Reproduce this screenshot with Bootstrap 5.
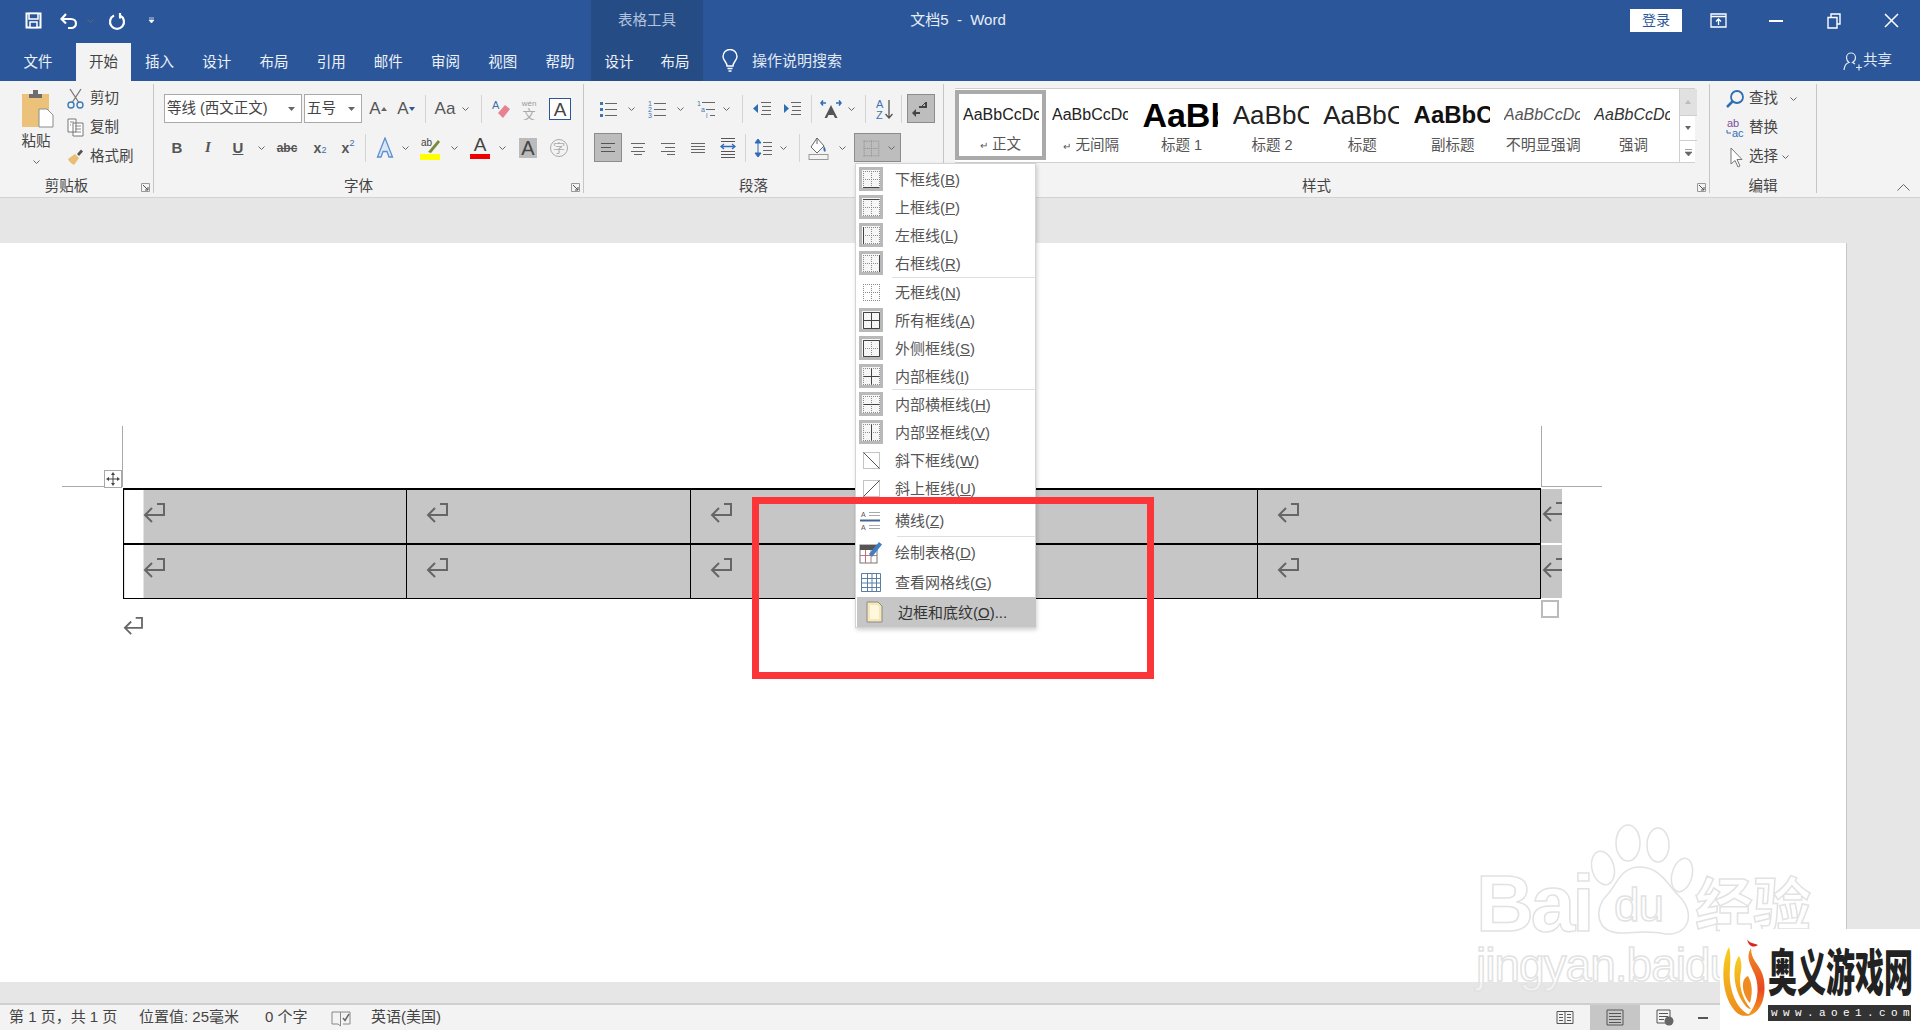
<!DOCTYPE html>
<html lang="zh-CN">
<head>
<meta charset="utf-8">
<title>文档5 - Word</title>
<link href="https://cdn.jsdelivr.net/npm/bootstrap@5.3.0/dist/css/bootstrap.min.css" rel="stylesheet">
<style>
html,body{height:1030px;overflow:hidden}
body{font-family:"Liberation Sans","Noto Sans CJK SC",sans-serif;font-size:15px;color:#444;background:#fff;position:relative}
.shell{height:1030px}
.tbar{height:41px;background:#2b579a;color:#fff}
.qat{width:591px;padding-left:25px}
.qb{width:21px;height:22px}
.qb2{width:10px;height:22px}
.q14{margin-left:14px}.q6{margin-left:6px}.q11{margin-left:11px}.qsp{margin-left:19px}
.ctxh{width:112px;background:#264c86;color:#b2c3dc;font-size:14.5px;line-height:41px}
.ttl{width:510px;color:#e8eef6;font-size:15px}
.signin{width:52px;height:23px;margin-left:auto;margin-right:8px;padding:0;border:0;border-radius:0;background:#fff;color:#2b579a;font-size:14px;line-height:23px}
.wbtn{width:57.5px;height:41px}
.tabs{height:40px;background:#2b579a}
.wtab{width:57.2px;height:38px;margin-top:2px;padding:0;color:#eef2f8;text-align:center;line-height:38px;font-size:14.5px}
.wtab:hover,.wtab:focus{color:#eef2f8}
.wtab.first{width:76px}
.wtab.on{width:55px;background:#f3f3f3;color:#444}
.wtab.on:hover{color:#444}
.ctxtabs{width:112px;background:#264c86;margin-left:2.4px}
.ctxtabs .wtab{width:56px}
.tell{margin-left:18px;color:#e3e9f2;font-size:15px}
.tellt{margin-left:13px}
.share{margin-left:auto;padding-right:28px;color:#e3e9f2;font-size:14.5px}
.rib{height:117px;background:#f3f3f3;border-bottom:1px solid #d2d2d2}
.grp{height:116px;padding-top:13px;border-right:1px solid;border-image:linear-gradient(transparent 4px,#c6c6c6 4px,#c6c6c6 111px,transparent 111px) 1;flex:none}
.g1{width:154px;padding-top:3px}
.g2{width:430px}
.g3{width:360px}
.g4{width:766px;padding-top:7px}
.g5{width:107px;padding-top:3px}
.glab{margin-top:auto;margin-bottom:1px;height:20px;line-height:20px;text-align:center;position:relative;padding-right:20px;font-size:14.5px}
.g5 .glab{padding-right:0}
.launch{position:absolute;right:3px;top:7px;width:9px;height:9px}
.rw{height:29px;margin-bottom:10px;display:flex;align-items:center}
.rw.last{margin-bottom:0}
.p2l{padding-left:9px}
.p1l{padding-left:10px}
.ic{width:28px;height:29px;display:flex;align-items:center;justify-content:center;flex:none;color:#555;line-height:1}
.dd{width:12px;height:29px;display:flex;align-items:center;justify-content:center;flex:none}
.vs{width:1px;height:28px;background:#d4d4d4;flex:none;margin:0 5px}
.vs.tight{margin:0 3px}
.m3{margin-left:3px}.m5{margin-left:5px}.m6{margin-left:6px}.m2{margin-left:2px}.m8{margin-left:8px}.m10{margin-left:10px}
.press{background:#bdbdbd;border:1px solid #8c8c8c}
.bordbtn{width:47px;gap:6px}
.cmb{height:29px;background:#fff;border:1px solid #a9a9a9;display:flex;align-items:center;padding-left:2px;flex:none;font-size:14.5px;color:#444}
.cmb svg{margin-left:auto;margin-right:6px}
.cf{width:138px}.cs{width:58px;margin-left:2px}
.bI{font:italic 700 15px "Liberation Serif",serif}
.bB{font:700 15px "Liberation Sans",sans-serif}
.bU{font:700 15px "Liberation Sans",sans-serif;text-decoration:underline}
.bS{font:700 12px "Liberation Sans",sans-serif;text-decoration:line-through}
.bX{font:700 14px "Liberation Sans",sans-serif}
.bX sub,.bX sup{font-size:9px;font-weight:400;color:#3c6db0}
.bA{font:400 17px "Liberation Sans",sans-serif}
.paste{width:72px;margin-right:-5px;text-align:center;padding-top:5px;flex:none}
.pst{margin-left:18px;display:block}
.plab{margin-top:3px;line-height:18px;font-size:14.5px}
.clipi{height:29px;display:flex;align-items:center;gap:6px;white-space:nowrap;font-size:14.5px}
.clipi svg{flex:none}
.gal{width:740px;height:75px;margin-left:11px;background:#fff;border-top:1px solid #cfcfcf;border-bottom:1px solid #cfcfcf;flex:none}
.sty{width:90.4px;padding:0 6px;text-align:center;flex:none}
.sty.sel{width:91px;border:4px solid #aaa;height:70px;margin-top:1px;background:#fff;padding:0 4px}
.smp{height:48px;line-height:52px;overflow:hidden;white-space:nowrap;text-align:left;width:76px;color:#222}
.sel .smp{height:42px;line-height:42px}
.lbl{font-size:14.5px;color:#555;line-height:16px;white-space:nowrap;margin-left:-6px;margin-right:-6px}
.lbl.tiny{font-size:15px}
.mini{font-size:10px}
.s1{font-size:16px}.s2{font-size:34px;font-weight:700;color:#000}.s3{font-size:26px;font-weight:400}.s4{font-size:24px;font-weight:700;color:#111}.s5{font-size:16px;font-style:italic;color:#555}.s6{font-size:16px;font-style:italic;color:#333}
.scr{width:18px;margin-left:auto;border-left:1px solid #cfcfcf;flex:none}
.scr div{height:24.5px;display:flex;align-items:center;justify-content:center;border-bottom:1px solid #cfcfcf}
.scr .dis{height:27px;background:#e1e1e1}
.scr .lst{border-bottom:0}
.edit{height:29px;display:flex;align-items:center;padding-left:15px;font-size:14.5px;gap:4px}
.edit svg:first-child{width:20px;flex:none}
.rest{flex:1;display:flex;justify-content:flex-end;align-items:flex-end;padding:0 10px 6px 0}
.band{height:45px;background:#e6e6e6}
.mid{flex:1;min-height:0}
.sheet{width:1847px;background:#fff;border-right:1px solid #c6c6c6;height:739px;flex:none}
.side{flex:1;background:#e6e6e6}
.twrap{margin:245px 0 0 123px;width:1439px;position:relative}
.crop{position:absolute;border:0 solid #a9a9a9}
.cl{left:-61px;top:-62px;width:61px;height:61px;border-right-width:1px;border-bottom-width:1px}
.cr{left:1418px;top:-62px;width:61px;height:61px;border-left-width:1px;border-bottom-width:1px}
.mv{position:absolute;left:-19px;top:-18px;width:18px;height:18px;border:1px solid #a9a9a9;background:#fff;display:flex;align-items:center;justify-content:center}
.rz{position:absolute;left:1418px;top:112px;width:18px;height:18px;border:2px solid #bbb;background:#fff}
.wtbl{table-layout:fixed;width:1439px;margin:0;border-collapse:collapse}
.wtbl>tbody>tr>td{padding:13px 0 0 19px;background:#c6c6c6;box-shadow:none;border:1px solid #000;border-top:2px solid #000;border-bottom:2px solid #000;height:55px;vertical-align:top;line-height:0;width:283.6px}
.wtbl>tbody>tr:last-child>td{border-bottom:1px solid #000;height:54px}
.wtbl>tbody>tr>td.inset{background:linear-gradient(90deg,#fff 19px,#c6c6c6 19px);width:283px}
.wtbl>tbody>tr>td.eor{width:21px;padding:13px 0 0 1px;border:0;border-left:1px solid #000;border-bottom:2px solid #fff}
.wtbl>tbody>tr:last-child>td.eor{border-bottom:0}
.clipr{width:20px;overflow:hidden}
.lastp{margin-top:18px;line-height:0}
.gbar{height:21px;background:#e6e6e6}
.stat{height:27px;background:#f3f3f3;border-top:2px solid #cfcfcf;font-size:15px;color:#444}
.st{flex:none;white-space:nowrap}
.st1{width:139px;padding-left:9px}
.st2{width:126px}
.st3{width:66px}
.st4{width:40px}
.stR{margin-left:auto;padding-right:212px}
.vw{width:50px;height:25px;display:flex;align-items:center;justify-content:center}
.vw.on{background:#c6c6c6}
.wmenu.dropdown-menu{position:absolute;left:855px;top:163px;width:181px;height:465px;padding:1px 0 0;margin:0;border:1px solid #d4d4d4;border-radius:0;background:#fff;box-shadow:1px 2px 4px rgba(0,0,0,.18);display:block;z-index:20;min-width:0}
.wmenu .dropdown-item{height:28px;padding:0 0 0 3px;display:flex;align-items:center;gap:12px;color:#555;font-size:15px;line-height:1;white-space:nowrap}
.wmenu .dropdown-item svg{flex:none}
.wmenu .tall{height:30px}
.wmenu .sep{height:0;margin:0 0 0 36px;border-top:1px solid #dedede}
.wmenu .sep0{margin-top:-1px}
.wmenu .sep2{margin:2px 0 0 41px}
.wmenu .gapt{margin-top:4px}
.wmenu .dropdown-item.hit{background:#c6c6c6;color:#333;margin:0 1px;gap:11px}
.wmenu .hit svg{margin-left:3px}
.redbox{position:absolute;left:752px;top:497px;width:402px;height:182px;border:7px solid #fb3538;z-index:30;pointer-events:none}
.wm{position:absolute;left:1470px;top:820px;width:350px;height:175px;z-index:5;overflow:visible}
.wm div{position:absolute;color:rgba(255,255,255,.5);-webkit-text-stroke:1.5px #e2e2e2;white-space:nowrap;line-height:1}
.wb{left:6px;top:44px;font:700 80px "Liberation Sans",sans-serif;letter-spacing:-3px}
.wd{left:144px;top:62px;font:400 46px "Liberation Sans",sans-serif;letter-spacing:-1px}
.wj{left:225px;top:52px;font:700 58px "Noto Sans CJK SC",sans-serif}
.wy{left:6px;top:122px;font:400 46px "Liberation Sans",sans-serif;letter-spacing:-1px}
.wm svg{position:absolute;left:0;top:0}
.brand{position:absolute;left:1720px;top:929px;width:200px;height:101px;background:#fff;z-index:25;display:flex}
.brt{width:143px;padding-top:16px}
.brn{font:900 29px/29px "Noto Sans CJK SC",sans-serif;color:#222;height:50px;transform:scaleY(1.72);transform-origin:top left;white-space:nowrap;width:145px}
.bru{margin-top:10px;height:16px;background:#333;color:#fff;font:400 11px/16px "Liberation Mono",monospace;letter-spacing:5.4px;padding-left:3px;white-space:nowrap;overflow:hidden}
</style>
</head>
<body>
<svg class="d-none" xmlns="http://www.w3.org/2000/svg">
  <symbol id="ret" viewBox="0 0 22 20"><path d="M14 1H21V12H2M9 5L2 12L9 19" fill="none" stroke="#666" stroke-width="2"/></symbol>
  <symbol id="chev" viewBox="0 0 7 4"><path d="M.5.5L3.5 3.5L6.5.5" fill="none" stroke="#666" stroke-width="1"/></symbol>
  <symbol id="lnch" viewBox="0 0 9 9"><path d="M.5 8.5V.5H8.5V8.5Z" fill="none" stroke="#999"/><path d="M2 2L7 7M7 4V7H4" fill="none" stroke="#555"/></symbol>
  <symbol id="gridb" viewBox="0 0 24 24"><g fill="none" stroke="#8a8a8a" stroke-dasharray="1 1"><path d="M4 4.500H20M4 12.500H20M4 20.500H20M4.500 4V21M12.500 4V21M20.500 4V21"/></g></symbol>
  <symbol id="gridon" viewBox="0 0 24 24"><rect width="24" height="24" fill="#b9b9b9"/><rect x="3" y="3" width="18" height="18" fill="#f6f6f6"/><g fill="none" stroke="#8a8a8a" stroke-dasharray="1 1"><path d="M4 4.500H20M4 12.500H20M4 20.500H20M4.500 4V21M12.500 4V21M20.500 4V21"/></g></symbol>
  <symbol id="lines" viewBox="0 0 20 20"><path d="M3 5.500H17M3 8.500H17M3 11.500H17M3 14.500H17" fill="none" stroke="#666"/></symbol>
</svg>
<div class="shell d-flex flex-column">
  <div class="tbar d-flex align-items-center">
    <div class="qat d-flex align-items-center">
      <div class="qb d-flex align-items-center"><svg width="17" height="17" viewBox="0 0 17 17"><path d="M1.500 1.500H15.500V15.500H1.500Z" fill="none" stroke="#fff" stroke-width="2"/><path d="M4 1.500H13V7H4ZM5 10H12V15.500H5Z" fill="#2b579a" stroke="#fff" stroke-width="1.500"/></svg></div>
      <div class="qb d-flex align-items-center q14"><svg width="18" height="16" viewBox="0 0 18 16"><path d="M2 6H11C14 6 16 8 16 10.500C16 13 14 15 11 15H8M6 1L1.500 6L6 10.500" fill="none" stroke="#fff" stroke-width="2.200"/></svg></div>
      <div class="qb2 d-flex align-items-center q6"><svg width="7" height="4"><use href="#chev"/></svg></div>
      <div class="qb d-flex align-items-center q11"><svg width="18" height="18" viewBox="0 0 18 18"><path d="M6 3.500A7 7 0 1 0 12 3.500M12 1V6.500" fill="none" stroke="#fff" stroke-width="2.200"/></svg></div>
      <div class="qb2 d-flex align-items-center qsp"><svg width="7" height="7" viewBox="0 0 7 7"><path d="M1 1H6M1 3H6L3.500 6Z" fill="#fff" stroke="#fff" stroke-width=".7"/></svg></div>
    </div>
    <div class="ctxh text-center">表格工具</div>
    <div class="ttl text-center">文档5&nbsp; -&nbsp; Word</div>
    <button class="btn signin" type="button">登录</button>
    <div class="wbtn d-flex align-items-center justify-content-center"><svg width="17" height="15" viewBox="0 0 17 15"><path d="M1 1H16V14H1ZM1 3.500H16M8.500 12V6M6 8.500L8.500 6L11 8.500" fill="none" stroke="#fff" stroke-width="1.300"/></svg></div>
    <div class="wbtn d-flex align-items-center justify-content-center"><svg width="14" height="2"><rect width="14" height="2" fill="#fff"/></svg></div>
    <div class="wbtn d-flex align-items-center justify-content-center"><svg width="14" height="16" viewBox="0 0 14 16"><path d="M1 4.500H10V15H1ZM4 4V1H13V11H10" fill="none" stroke="#fff" stroke-width="1.400"/></svg></div>
    <div class="wbtn d-flex align-items-center justify-content-center"><svg width="15" height="15" viewBox="0 0 15 15"><path d="M1 1L14 14M14 1L1 14" fill="none" stroke="#fff" stroke-width="1.500"/></svg></div>
  </div>
  <div class="tabs d-flex">
    <ul class="nav flex-nowrap">
      <li class="nav-item"><a class="nav-link wtab first" href="#">文件</a></li>
      <li class="nav-item"><a class="nav-link wtab on" href="#">开始</a></li>
      <li class="nav-item"><a class="nav-link wtab" href="#">插入</a></li>
      <li class="nav-item"><a class="nav-link wtab" href="#">设计</a></li>
      <li class="nav-item"><a class="nav-link wtab" href="#">布局</a></li>
      <li class="nav-item"><a class="nav-link wtab" href="#">引用</a></li>
      <li class="nav-item"><a class="nav-link wtab" href="#">邮件</a></li>
      <li class="nav-item"><a class="nav-link wtab" href="#">审阅</a></li>
      <li class="nav-item"><a class="nav-link wtab" href="#">视图</a></li>
      <li class="nav-item"><a class="nav-link wtab" href="#">帮助</a></li>
    </ul>
    <ul class="nav flex-nowrap ctxtabs">
      <li class="nav-item"><a class="nav-link wtab" href="#">设计</a></li>
      <li class="nav-item"><a class="nav-link wtab" href="#">布局</a></li>
    </ul>
    <div class="tell d-flex align-items-center">
      <svg width="18" height="24" viewBox="0 0 18 24"><path d="M6 17C6 13 2 11.500 2 7.500A7 7 0 0 1 16 7.500C16 11.500 12 13 12 17ZM6.500 19.500H11.500M7.500 22H10.500" fill="none" stroke="#fff" stroke-width="1.400"/></svg>
      <span class="tellt">操作说明搜索</span>
    </div>
    <div class="share d-flex align-items-center">
      <svg width="20" height="19" viewBox="0 0 20 19"><path d="M1 18C1.500 13 4 11 6 10.500C4 9 3.500 7.500 3.500 5.500A4.500 4.500 0 0 1 12.500 5.500C12.500 7.500 11.500 9.500 9.500 10.500C10.500 11 11 11.300 12 12M13 15.500H19M16 12.500V18.500" fill="none" stroke="#e3e9f2" stroke-width="1.200"/></svg>
      <span>共享</span>
    </div>
  </div>

  <div class="rib d-flex">
    <div class="grp g1 d-flex flex-column">
      <div class="d-flex">
        <div class="paste">
          <svg class="pst" width="36" height="40" viewBox="0 0 36 40"><rect x="4" y="5" width="27" height="33" fill="#ecc27a"/><path d="M11 5H15V1H20V5H24V9H11Z" fill="#6e6e6e"/><path d="M21 20H29L35 26V38H21Z" fill="#fff" stroke="#8c8c8c"/></svg>
          <div class="plab">粘贴</div>
          <svg width="7" height="4"><use href="#chev"/></svg>
        </div>
        <div>
          <div class="clipi"><svg width="17" height="21" viewBox="0 0 17 21"><path d="M3 1L11.500 14M14 1L5.500 14" fill="none" stroke="#777" stroke-width="1.300"/><circle cx="4" cy="17" r="3" fill="none" stroke="#3e79b8" stroke-width="1.400"/><circle cx="13" cy="17" r="3" fill="none" stroke="#3e79b8" stroke-width="1.400"/></svg><span>剪切</span></div>
          <div class="clipi"><svg width="17" height="19" viewBox="0 0 17 19"><path d="M1 1H9V14H1ZM6 5H16V18H6Z" fill="#fff" stroke="#777"/><path d="M3 4H7M3 7H4M8 8H14M8 11H14M8 14H14" stroke="#888"/></svg><span>复制</span></div>
          <div class="clipi"><svg width="17" height="18" viewBox="0 0 17 18"><path d="M1 11L8 6L12 10L7 17C5 16 2 14 1 11Z" fill="#e9bd74"/><path d="M10 6L14 1.500L16 3.500L12 8Z" fill="#555"/></svg><span>格式刷</span></div>
        </div>
      </div>
      <div class="glab">剪贴板<svg class="launch"><use href="#lnch"/></svg></div>
    </div>

    <div class="grp g2 d-flex flex-column">
      <div class="rw p1l">
        <div class="cmb cf">等线 (西文正文)<svg width="7" height="4" viewBox="0 0 7 4"><path d="M0 0H7L3.500 4Z" fill="#666"/></svg></div>
        <div class="cmb cs">五号<svg width="7" height="4" viewBox="0 0 7 4"><path d="M0 0H7L3.500 4Z" fill="#666"/></svg></div>
        <div class="ic bA m2">A<svg width="6" height="4" viewBox="0 0 6 4"><path d="M0 4L3 0L6 4Z" fill="#666"/></svg></div>
        <div class="ic bA">A<svg width="6" height="4" viewBox="0 0 6 4"><path d="M0 0H6L3 4Z" fill="#2b579a"/></svg></div>
        <div class="vs"></div>
        <div class="ic bA">Aa</div>
        <div class="dd"><svg width="7" height="4"><use href="#chev"/></svg></div>
        <div class="vs m10"></div>
        <div class="ic"><svg width="20" height="20" viewBox="0 0 20 20"><text x="1" y="10" font-size="11" font-family="Liberation Sans" fill="#3f6fae">A</text><path d="M7 14L14 6L19 10L12 19Z" fill="#e8808f"/></svg></div>
        <div class="ic"><svg width="20" height="22" viewBox="0 0 20 22"><text x="10" y="8" text-anchor="middle" font-size="8" font-family="Liberation Sans" fill="#999">wén</text><text x="10" y="21" text-anchor="middle" font-size="13" font-family="Noto Sans CJK SC" fill="#aaa">文</text></svg></div>
        <div class="ic m3"><svg width="22" height="22" viewBox="0 0 22 22"><rect x=".5" y=".5" width="21" height="21" fill="#fff" stroke="#2b579a"/><text x="11" y="18" text-anchor="middle" font-size="19" font-family="Liberation Sans" fill="#444">A</text></svg></div>
      </div>
      <div class="rw last p2l">
        <div class="ic bB">B</div>
        <div class="ic bI m3">I</div>
        <div class="ic bU m2">U</div>
        <div class="dd m3"><svg width="7" height="4"><use href="#chev"/></svg></div>
        <div class="ic bS m6">abc</div>
        <div class="ic bX m5">x<sub>2</sub></div>
        <div class="ic bX">x<sup>2</sup></div>
        <div class="vs m3"></div>
        <div class="ic"><svg width="20" height="22" viewBox="0 0 20 22"><path d="M10 1L17.500 20H14L12 14.500H8L6 20H2.500Z" fill="#dbe7f6" stroke="#5b8fd0" stroke-width="1.300"/></svg></div>
        <div class="dd"><svg width="7" height="4"><use href="#chev"/></svg></div>
        <div class="ic m6"><svg width="22" height="24" viewBox="0 0 22 24"><text x="1" y="10" font-size="10" font-family="Liberation Sans" fill="#444">ab</text><path d="M8 16L18 4L20 6L11 17Z" fill="#7a8a3a"/><rect y="18" width="20" height="6" fill="#ffff00"/></svg></div>
        <div class="dd m3"><svg width="7" height="4"><use href="#chev"/></svg></div>
        <div class="ic m6"><svg width="20" height="23" viewBox="0 0 20 23"><text x="10" y="15" text-anchor="middle" font-size="19" font-family="Liberation Sans" fill="#444">A</text><rect y="18" width="20" height="5" fill="#ee0000"/></svg></div>
        <div class="dd m2"><svg width="7" height="4"><use href="#chev"/></svg></div>
        <div class="ic m6"><svg width="18" height="20" viewBox="0 0 18 20"><rect width="18" height="20" fill="#bbb"/><text x="9" y="17" text-anchor="middle" font-size="20" font-family="Liberation Sans" fill="#444">A</text></svg></div>
        <div class="ic m3"><svg width="20" height="20" viewBox="0 0 20 20"><circle cx="10" cy="10" r="8.500" fill="none" stroke="#aaa"/><text x="10" y="14.500" text-anchor="middle" font-size="12" font-family="Noto Sans CJK SC" fill="#aaa">字</text></svg></div>
      </div>
      <div class="glab">字体<svg class="launch"><use href="#lnch"/></svg></div>
    </div>

    <div class="grp g3 d-flex flex-column">
      <div class="rw p1l">
        <div class="ic"><svg width="20" height="20" viewBox="0 0 20 20"><path d="M7 4.500H19M7 10.500H19M7 16.500H19" stroke="#666"/><path d="M2 3H5V6H2ZM2 9H5V12H2ZM2 15H5V18H2Z" fill="#3f73b4"/></svg></div>
        <div class="dd m3"><svg width="7" height="4"><use href="#chev"/></svg></div>
        <div class="ic m6"><svg width="20" height="20" viewBox="0 0 20 20"><path d="M7 4.500H19M7 10.500H19M7 16.500H19" stroke="#666"/><text x="1" y="7" font-size="7" font-family="Liberation Sans" fill="#3f73b4">1</text><text x="1" y="13" font-size="7" font-family="Liberation Sans" fill="#3f73b4">2</text><text x="1" y="19" font-size="7" font-family="Liberation Sans" fill="#3f73b4">3</text></svg></div>
        <div class="dd m3"><svg width="7" height="4"><use href="#chev"/></svg></div>
        <div class="ic m6"><svg width="20" height="20" viewBox="0 0 20 20"><path d="M6 3.500H19M10 10.500H19M14 16.500H19" stroke="#666"/><text x="1" y="7" font-size="7" font-family="Liberation Sans" fill="#3f73b4">1</text><text x="5" y="13" font-size="7" font-family="Liberation Sans" fill="#3f73b4">a</text><text x="10" y="19" font-size="7" font-family="Liberation Sans" fill="#3f73b4">i</text></svg></div>
        <div class="dd"><svg width="7" height="4"><use href="#chev"/></svg></div>
        <div class="vs m10"></div>
        <div class="ic"><svg width="20" height="20" viewBox="0 0 20 20"><path d="M9 3.500H19M10 7.500H19M10 11.500H19M9 15.500H19" stroke="#666"/><path d="M1 9.500L6 5V14Z" fill="#2f6db5"/></svg></div>
        <div class="ic m2"><svg width="20" height="20" viewBox="0 0 20 20"><path d="M9 3.500H19M10 7.500H19M10 11.500H19M9 15.500H19" stroke="#666"/><path d="M7 9.500L2 5V14Z" fill="#2f6db5"/></svg></div>
        <div class="vs"></div>
        <div class="ic"><svg width="22" height="20" viewBox="0 0 22 20"><path d="M11 6L17.500 19H15L13.500 16H8.500L7 19H4.500Z" fill="#555"/><path d="M1 4H6M3 1.500L1 4L3 6.500M21 4H16M19 1.500L21 4L19 6.500" fill="none" stroke="#2f6db5" stroke-width="1.500"/></svg></div>
        <div class="dd"><svg width="7" height="4"><use href="#chev"/></svg></div>
        <div class="vs m8"></div>
        <div class="ic"><svg width="20" height="22" viewBox="0 0 20 22"><text x="1" y="10" font-size="11" font-family="Liberation Sans" fill="#3f73b4">A</text><text x="1" y="21" font-size="11" font-family="Liberation Sans" fill="#3f73b4">Z</text><path d="M14 2V20M10.500 16L14 20L17.500 16" fill="none" stroke="#555" stroke-width="1.300"/></svg></div>
        <div class="vs m2"></div>
        <div class="ic press"><svg width="20" height="18" viewBox="0 0 20 18"><path d="M8 8H16V2H14V6H8ZM2 12H9V14H2Z" fill="#444"/><path d="M5 9L1 13L5 17" fill="#444"/><path d="M11 6L15 2" stroke="#444"/></svg></div>
      </div>
      <div class="rw last p1l">
        <div class="ic press"><svg width="20" height="20"><path d="M3 5.500H17M3 9.500H13M3 13.500H17" fill="none" stroke="#555"/></svg></div>
        <div class="ic m2"><svg width="20" height="20"><path d="M3 5.500H17M5 9.500H15M3 13.500H17M6 16.500H14" fill="none" stroke="#666"/></svg></div>
        <div class="ic m2"><svg width="20" height="20"><path d="M3 5.500H17M7 9.500H17M3 13.500H17M9 16.500H17" fill="none" stroke="#666"/></svg></div>
        <div class="ic m2"><svg width="20" height="20"><use href="#lines"/></svg></div>
        <div class="ic m2"><svg width="20" height="24" viewBox="0 0 20 24"><path d="M3 2.500H17M3 5.500H17M3 15.500H17M3 18.500H17M3 21.500H17" stroke="#555"/><path d="M3 10.500H17M6 8L3 10.500L6 13M14 8L17 10.500L14 13" fill="none" stroke="#2f6db5" stroke-width="1.300"/></svg></div>
        <div class="vs tight"></div>
        <div class="ic"><svg width="20" height="22" viewBox="0 0 20 22"><path d="M10 5.500H19M10 9.500H19M10 13.500H19M10 17.500H19" stroke="#666"/><path d="M5 4V18M2 6L5 2L8 6ZM2 16L5 20L8 16Z" fill="#2f6db5" stroke="#2f6db5"/></svg></div>
        <div class="dd"><svg width="7" height="4"><use href="#chev"/></svg></div>
        <div class="vs m10"></div>
        <div class="ic"><svg width="22" height="24" viewBox="0 0 22 24"><path d="M9 2L3 11L9 17L16 10Z" fill="#fff" stroke="#666"/><path d="M9 2V8" stroke="#666"/><path d="M16 10C18 13 18 15 17 16C15 15 15 13 16 10Z" fill="#2f6db5"/><rect x="1" y="18.500" width="19" height="5" fill="#f3f3f3" stroke="#999"/></svg></div>
        <div class="dd m3"><svg width="7" height="4"><use href="#chev"/></svg></div>
        <div class="ic press bordbtn m6"><svg width="22" height="22"><use href="#gridb"/></svg><svg width="7" height="4"><use href="#chev"/></svg></div>
      </div>
      <div class="glab">段落<svg class="launch"><use href="#lnch"/></svg></div>
    </div>

    <div class="grp g4 d-flex flex-column">
      <div class="gal d-flex">
        <div class="sty sel"><div class="smp s1">AaBbCcDc</div><div class="lbl"><span class="mini">↵</span> 正文</div></div>
        <div class="sty"><div class="smp s1">AaBbCcDc</div><div class="lbl"><span class="mini">↵</span> 无间隔</div></div>
        <div class="sty"><div class="smp s2">AaBbC</div><div class="lbl">标题 1</div></div>
        <div class="sty"><div class="smp s3">AaBbC</div><div class="lbl">标题 2</div></div>
        <div class="sty"><div class="smp s3">AaBbC</div><div class="lbl">标题</div></div>
        <div class="sty"><div class="smp s4">AaBbC</div><div class="lbl">副标题</div></div>
        <div class="sty"><div class="smp s5">AaBbCcDc</div><div class="lbl tiny">不明显强调</div></div>
        <div class="sty"><div class="smp s6">AaBbCcDc</div><div class="lbl">强调</div></div>
        <div class="scr">
          <div class="dis"><svg width="6" height="4" viewBox="0 0 6 4"><path d="M0 4L3 0L6 4Z" fill="#bbb"/></svg></div>
          <div><svg width="6" height="4" viewBox="0 0 6 4"><path d="M0 0H6L3 4Z" fill="#666"/></svg></div>
          <div class="lst"><svg width="7" height="8" viewBox="0 0 7 8"><path d="M0 .5H7M0 3H7L3.500 7Z" fill="#666" stroke="#666" stroke-width=".6"/></svg></div>
        </div>
      </div>
      <div class="glab">样式<svg class="launch"><use href="#lnch"/></svg></div>
    </div>

    <div class="grp g5 d-flex flex-column">
      <div class="edit"><svg width="20" height="20" viewBox="0 0 20 20"><circle cx="12" cy="8" r="6" fill="none" stroke="#2f6db5" stroke-width="1.800"/><path d="M7.500 12.500L2 18" stroke="#2f6db5" stroke-width="2.500"/></svg><span>查找</span><svg class="ms-2" width="7" height="4"><use href="#chev"/></svg></div>
      <div class="edit"><svg width="20" height="22" viewBox="0 0 20 22"><text x="2" y="10" font-size="11" font-family="Liberation Sans" fill="#7c4e9e">ab</text><text x="7" y="20" font-size="11" font-family="Liberation Sans" fill="#2f6db5">ac</text><path d="M2 13V16H6" fill="none" stroke="#2f6db5"/></svg><span>替换</span></div>
      <div class="edit"><svg width="20" height="22" viewBox="0 0 20 22"><path d="M6 2V18L10 14.500L13 21L15 20L12 13.500H17Z" fill="#fff" stroke="#777"/></svg><span>选择</span><svg width="7" height="4"><use href="#chev"/></svg></div>
      <div class="glab">编辑</div>
    </div>
    <div class="rest"><svg width="13" height="7" viewBox="0 0 13 7"><path d="M.5 6.500L6.500 .5L12.500 6.500" fill="none" stroke="#666"/></svg></div>
  </div>

  <div class="band"></div>
  <div class="mid d-flex">
    <div class="sheet">
      <div class="twrap">
        <div class="crop cl"></div>
        <div class="crop cr"></div>
        <div class="mv"><svg width="14" height="14" viewBox="0 0 14 14"><path d="M7 0L9 3H5ZM7 14L5 11H9ZM0 7L3 5V9ZM14 7L11 9V5Z" fill="#444"/><path d="M7 2V12M2 7H12" stroke="#444"/></svg></div>
        <table class="table wtbl">
          <tbody>
            <tr>
              <td class="inset"><svg width="22" height="20"><use href="#ret"/></svg></td>
              <td><svg width="22" height="20"><use href="#ret"/></svg></td>
              <td><svg width="22" height="20"><use href="#ret"/></svg></td>
              <td><svg width="22" height="20"><use href="#ret"/></svg></td>
              <td><svg width="22" height="20"><use href="#ret"/></svg></td>
              <td class="eor"><div class="clipr"><svg width="22" height="20"><use href="#ret"/></svg></div></td>
            </tr>
            <tr>
              <td class="inset"><svg width="22" height="20"><use href="#ret"/></svg></td>
              <td><svg width="22" height="20"><use href="#ret"/></svg></td>
              <td><svg width="22" height="20"><use href="#ret"/></svg></td>
              <td><svg width="22" height="20"><use href="#ret"/></svg></td>
              <td><svg width="22" height="20"><use href="#ret"/></svg></td>
              <td class="eor"><div class="clipr"><svg width="22" height="20"><use href="#ret"/></svg></div></td>
            </tr>
          </tbody>
        </table>
        <div class="rz"></div>
        <div class="lastp"><svg width="20" height="18"><use href="#ret"/></svg></div>
      </div>
    </div>
    <div class="side"></div>
  </div>
  <div class="gbar"></div>
  <div class="stat d-flex align-items-center">
    <div class="st st1">第 1 页，共 1 页</div>
    <div class="st st2">位置值: 25毫米</div>
    <div class="st st3">0 个字</div>
    <div class="st st4"><svg width="20" height="17" viewBox="0 0 20 17"><path d="M9.500 2H1V14H7L9.500 16V2ZM9.500 2H19V14H12" fill="none" stroke="#888"/><path d="M12 8L14 10.500L18 4" fill="none" stroke="#666" stroke-width="1.500"/></svg></div>
    <div class="st">英语(美国)</div>
    <div class="stR d-flex align-items-center">
      <div class="vw"><svg width="18" height="15" viewBox="0 0 18 15"><path d="M9 1.500H1V13.500H9M9 1.500H17V13.500H9M9 1V14M3 4.500H7M3 7.500H7M3 10.500H7M11 4.500H15M11 7.500H15M11 10.500H15" fill="none" stroke="#555"/></svg></div>
      <div class="vw on"><svg width="18" height="17" viewBox="0 0 18 17"><path d="M1 1H17V16H1ZM3 4.500H15M3 7.500H15M3 10.500H15M3 13.500H15" fill="none" stroke="#555"/></svg></div>
      <div class="vw"><svg width="18" height="17" viewBox="0 0 18 17"><path d="M1 1H14V14H1ZM3 4.500H12M3 7.500H12M3 10.500H8" fill="none" stroke="#555"/><circle cx="13" cy="12" r="4.500" fill="#666"/></svg></div>
      <svg class="ms-2" width="10" height="2"><rect width="10" height="2" fill="#555"/></svg>
    </div>
  </div>
</div>

<ul class="dropdown-menu show wmenu">
  <li><a class="dropdown-item" href="#"><svg width="24" height="24"><use href="#gridon"/><path d="M4 20.500H20" stroke="#444"/></svg><span>下框线(<u>B</u>)</span></a></li>
  <li><a class="dropdown-item" href="#"><svg width="24" height="24"><use href="#gridon"/><path d="M4 4.500H20" stroke="#444"/></svg><span>上框线(<u>P</u>)</span></a></li>
  <li><a class="dropdown-item" href="#"><svg width="24" height="24"><use href="#gridon"/><path d="M4.500 4V21" stroke="#444"/></svg><span>左框线(<u>L</u>)</span></a></li>
  <li><a class="dropdown-item" href="#"><svg width="24" height="24"><use href="#gridon"/><path d="M20.500 4V21" stroke="#444"/></svg><span>右框线(<u>R</u>)</span></a></li>
  <li class="sep"></li>
  <li><a class="dropdown-item" href="#"><svg width="24" height="24"><use href="#gridb"/></svg><span>无框线(<u>N</u>)</span></a></li>
  <li><a class="dropdown-item" href="#"><svg width="24" height="24"><use href="#gridon"/><path d="M4.500 4.500H20.500V20.500H4.500ZM4.500 12.500H20.500M12.500 4.500V20.500" fill="none" stroke="#444"/></svg><span>所有框线(<u>A</u>)</span></a></li>
  <li><a class="dropdown-item" href="#"><svg width="24" height="24"><use href="#gridon"/><path d="M4.500 4.500H20.500V20.500H4.500Z" fill="none" stroke="#444"/></svg><span>外侧框线(<u>S</u>)</span></a></li>
  <li><a class="dropdown-item" href="#"><svg width="24" height="24"><use href="#gridon"/><path d="M4.500 12.500H20.500M12.500 4.500V20.500" fill="none" stroke="#444"/></svg><span>内部框线(<u>I</u>)</span></a></li>
  <li class="sep sep0"></li>
  <li><a class="dropdown-item" href="#"><svg width="24" height="24"><use href="#gridon"/><path d="M4.500 12.500H20.500" stroke="#444"/></svg><span>内部横框线(<u>H</u>)</span></a></li>
  <li><a class="dropdown-item" href="#"><svg width="24" height="24"><use href="#gridon"/><path d="M12.500 4.500V20.500" stroke="#444"/></svg><span>内部竖框线(<u>V</u>)</span></a></li>
  <li><a class="dropdown-item" href="#"><svg width="24" height="24" viewBox="0 0 24 24"><path d="M4.500 4.500H20.500V20.500H4.500Z" fill="none" stroke="#888" stroke-dasharray="1 1"/><path d="M4.500 4.500L20.500 20.500" stroke="#555"/></svg><span>斜下框线(<u>W</u>)</span></a></li>
  <li><a class="dropdown-item" href="#"><svg width="24" height="24" viewBox="0 0 24 24"><path d="M4.500 4.500H20.500V20.500H4.500Z" fill="none" stroke="#888" stroke-dasharray="1 1"/><path d="M4.500 20.500L20.500 4.500" stroke="#555"/></svg><span>斜上框线(<u>U</u>)</span></a></li>
  <li class="gapt"><a class="dropdown-item" href="#"><svg width="24" height="24" viewBox="0 0 24 24"><text x="2" y="9" font-size="7" font-family="Liberation Sans" fill="#555">A</text><text x="2" y="22" font-size="7" font-family="Liberation Sans" fill="#555">A</text><path d="M10 4.500H21M10 7.500H21M10 17.500H21M10 20.500H21" stroke="#aaa"/><path d="M1 12.500H21" stroke="#44658f" stroke-width="2"/></svg><span>横线(<u>Z</u>)</span></a></li>
  <li class="sep sep2"></li>
  <li><a class="dropdown-item tall" href="#"><svg width="24" height="24" viewBox="0 0 24 24"><rect x="1" y="5" width="17" height="18" fill="#fff" stroke="#777"/><rect x="1" y="5" width="17" height="5" fill="#555"/><path d="M6.500 10V23M12 10V23M1 15.500H18" stroke="#b77"/><path d="M10 14L20 2L23 4.500L13 17Z" fill="#3f7fc4"/></svg><span>绘制表格(<u>D</u>)</span></a></li>
  <li><a class="dropdown-item tall" href="#"><svg width="24" height="24" viewBox="0 0 24 24"><path d="M2.500 3.500H21.500V21.500H2.500ZM2.500 8.500H21.500M2.500 13H21.500M2.500 17.500H21.500M8.500 3.500V21.500M13 3.500V21.500M17.500 3.500V21.500" fill="none" stroke="#5a7ea8"/></svg><span>查看网格线(<u>G</u>)</span></a></li>
  <li><a class="dropdown-item tall hit" href="#"><svg width="24" height="24" viewBox="0 0 24 24"><path d="M4 2H15L19 6V22H4Z" fill="#f6e7b8" stroke="#8a8a8a"/><path d="M7 5H14L16 7V19H7Z" fill="#fff8dc"/></svg><span>边框和底纹(<u>O</u>)...</span></a></li>
</ul>

<div class="wm">
  <svg width="240" height="120" viewBox="0 0 240 120"><g fill="rgba(255,255,255,.5)" stroke="#e2e2e2" stroke-width="1.500"><ellipse cx="158" cy="23" rx="12" ry="18"/><ellipse cx="188" cy="25" rx="11" ry="17"/><ellipse cx="133" cy="48" rx="11" ry="17" transform="rotate(-15 133 48)"/><ellipse cx="212" cy="55" rx="10" ry="17" transform="rotate(15 212 55)"/><path d="M170 47C150 47 147 65 137 75C124 88 125 112 150 113C165 113 178 110 195 114C220 116 226 92 208 75C198 65 190 47 170 47Z"/></g></svg>
  <div class="wb">Bai</div>
  <div class="wd">du</div>
  <div class="wj">经验</div>
  <div class="wy">jingyan.baidu</div>
</div>

<div class="redbox"></div>

<div class="brand">
  <svg width="48" height="101" viewBox="0 0 48 101">
    <defs>
      <linearGradient id="fy" x1="0" y1="0" x2="0" y2="1"><stop offset="0" stop-color="#f6d01f"/><stop offset="1" stop-color="#ef8a1c"/></linearGradient>
      <linearGradient id="fr" x1="0" y1="0" x2="0" y2="1"><stop offset="0" stop-color="#f19026"/><stop offset=".6" stop-color="#e9471f"/><stop offset="1" stop-color="#f3a01f"/></linearGradient>
    </defs>
    <path d="M9 18C2 30 0 60 12 78C18 87 24 88 30 86C20 82 12 70 10 52C9 40 12 28 9 18Z" fill="url(#fy)"/>
    <path d="M19 27C12 36 13 58 22 72C25 77 28 80 31 80C22 70 18 55 21 42C22 36 21 30 19 27Z" fill="url(#fy)"/>
    <path d="M28 47C20 50 22 66 30 74C33 62 32 54 28 47Z" fill="#f08a22"/>
    <path d="M31 19C25 29 31 36 35 46C40 60 38 76 27 87C46 84 47 56 42 44C38 34 31 31 31 19Z" fill="url(#fr)"/>
    <path d="M27 10C29 14 33 14 38 16C33 19 29 18 27 10Z" fill="#d8261c"/>
  </svg>
  <div class="brt">
    <div class="brn">奥义游戏网</div>
    <div class="bru">www.aoe1.com</div>
  </div>
</div>
<script src="https://cdn.jsdelivr.net/npm/bootstrap@5.3.0/dist/js/bootstrap.bundle.min.js"></script>
</body>
</html>
